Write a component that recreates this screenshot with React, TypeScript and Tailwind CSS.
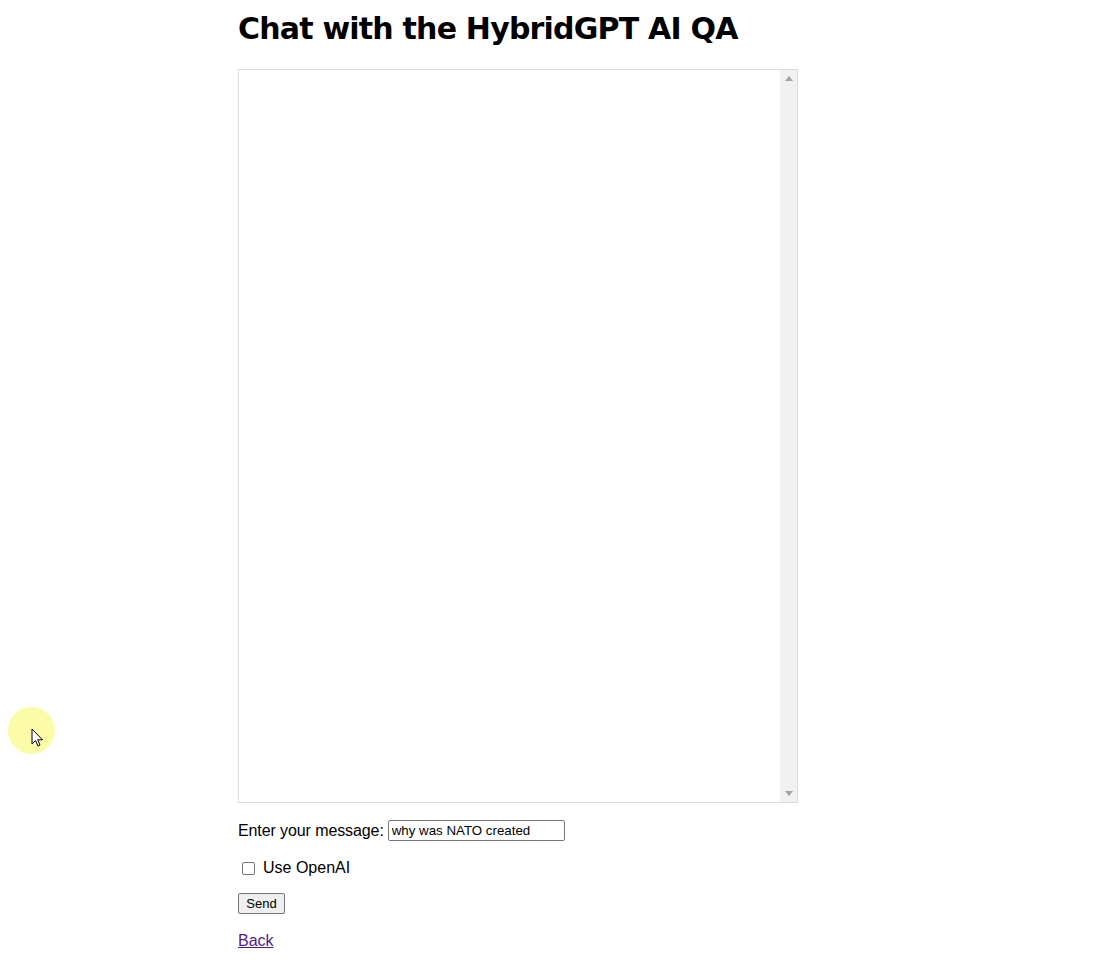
import React from "react";

export default function App() {
  return (
    <div className="relative min-h-[960px] w-[1108px] bg-white text-black" style={{ fontFamily: "Tahoma, 'Liberation Sans', Arial, sans-serif" }}>
      <div className="ml-[238px] w-[560px] pt-[10px]">
        <h1 className="text-[30px] font-bold leading-[38px] tracking-[-0.8px] text-black" style={{ fontFamily: "'DejaVu Sans', Verdana, sans-serif" }}>
          Chat with the HybridGPT AI QA
        </h1>
        <div className="mt-[21px] flex h-[734px] w-[560px] border border-[#dcdcdc] bg-white">
          <div className="flex-1" />
          <div className="flex w-[17px] flex-col items-center justify-between bg-[#f1f0f3] py-[6px]">
            <svg width="8" height="5" viewBox="0 0 8 5"><path d="M0 5 L4 0 L8 5 Z" fill="#a3a3a3" /></svg>
            <svg width="8" height="5" viewBox="0 0 8 5"><path d="M0 0 L4 5 L8 0 Z" fill="#a3a3a3" /></svg>
          </div>
        </div>
        <div className="mt-[17px] flex items-center text-[16px] leading-[20px]">
          <span className="tracking-[-0.1px]">Enter your message:</span>
          <input
            defaultValue="why was NATO created"
            className="ml-[4px] h-[21px] w-[177px] border border-[#767676] rounded-[2px] px-[3px] text-[13.3px] text-black outline-none"
            style={{ fontFamily: "Tahoma, 'Liberation Sans', Arial, sans-serif" }}
          />
        </div>
        <div className="mt-[17px] flex items-center text-[16px] leading-[20px]">
          <span className="ml-[4px] mr-[8px] inline-block h-[13px] w-[13px] rounded-[2px] border border-[#767676] bg-white" />
          <span>Use OpenAI</span>
        </div>
        <div className="mt-[13px]">
          <button className="h-[21px] w-[47px] rounded-[2px] border border-[#767676] bg-[#efefef] text-[13px] leading-[19px] text-black">
            Send
          </button>
        </div>
        <div className="mt-[16px] text-[16px] leading-[20px]">
          <a href="#" className="text-[#551a8b] underline">Back</a>
        </div>
      </div>
      <div className="absolute left-[8px] top-[707px] h-[47px] w-[47px] rounded-full bg-[#fbfb9f] opacity-90" />
      <svg className="absolute left-[31px] top-[728px]" width="14" height="20" viewBox="0 0 14 20">
        <path d="M1 1 L1 16 L4.5 12.5 L7 18 L9 17 L6.7 11.8 L11.5 11.8 Z" fill="white" stroke="black" strokeWidth="1" strokeLinejoin="round" />
      </svg>
    </div>
  );
}
